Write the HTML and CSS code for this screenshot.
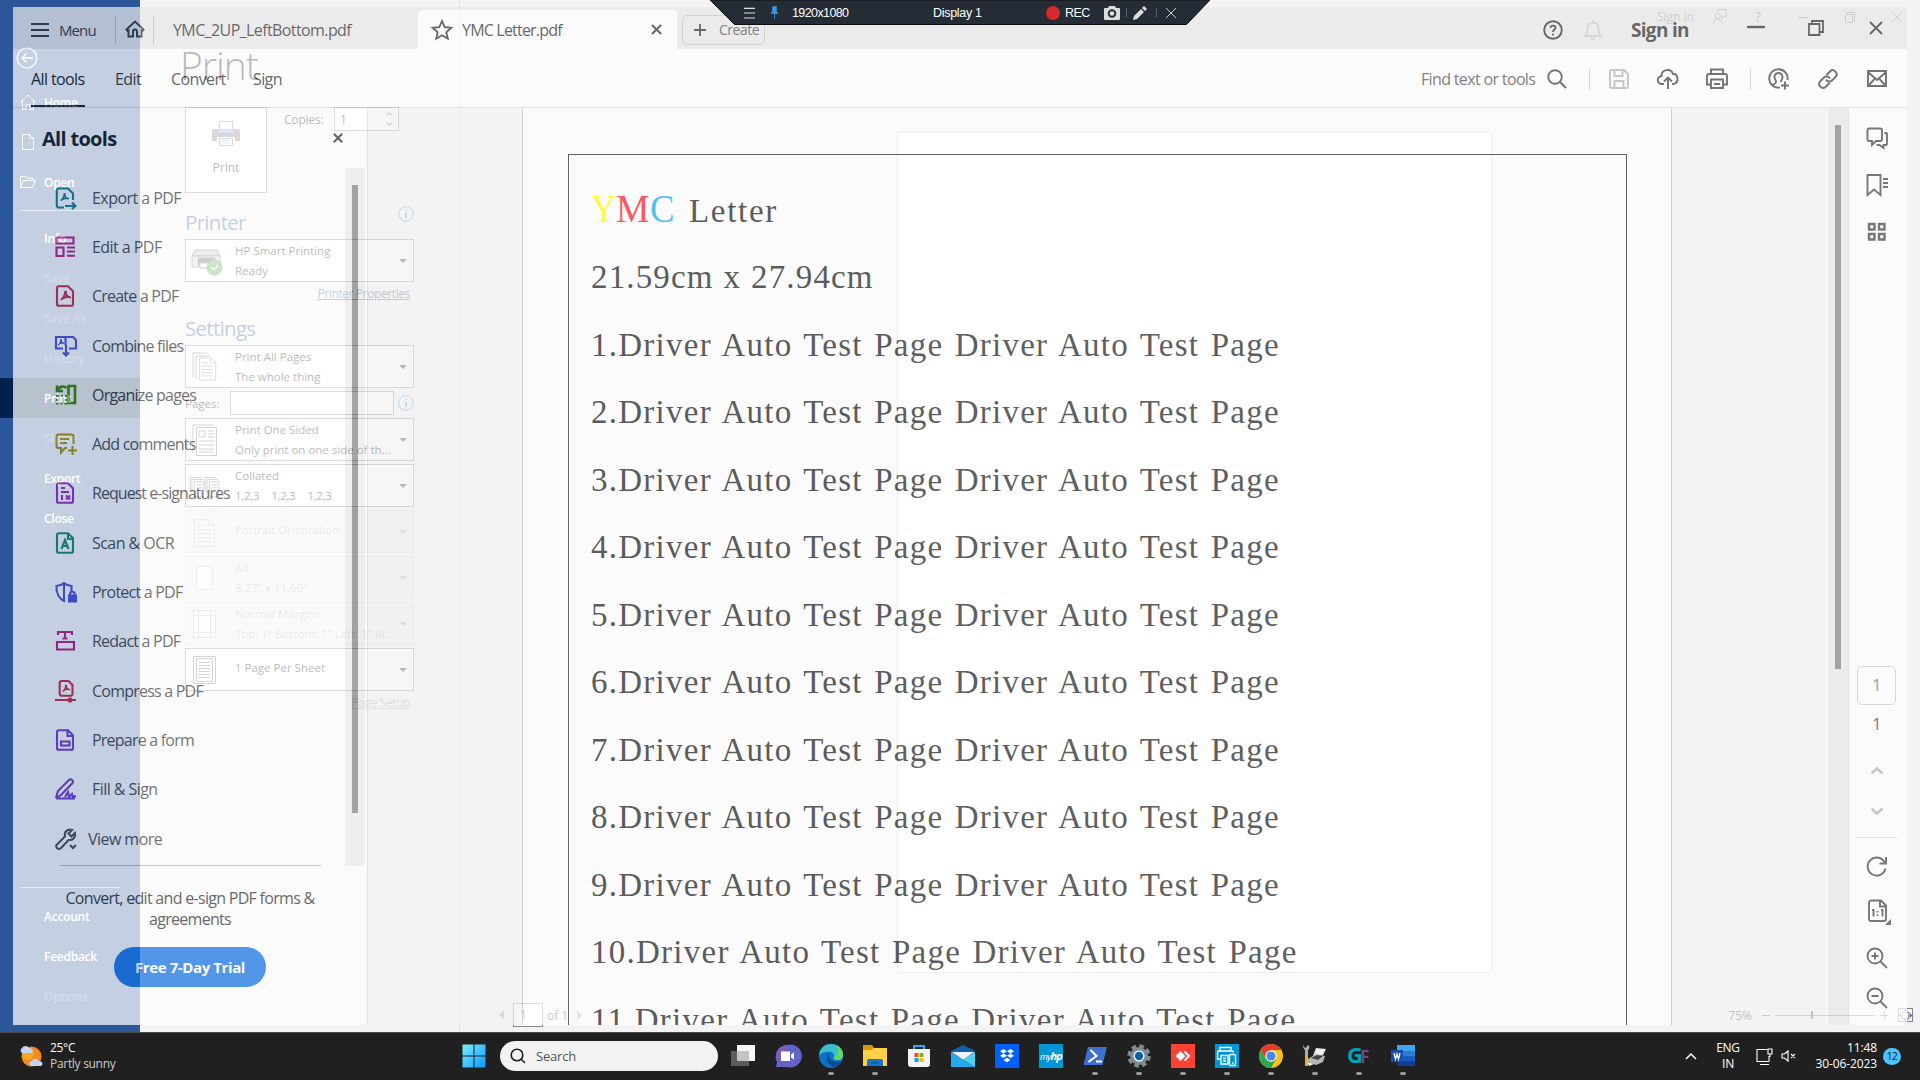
FILE: index.html
```html
<!DOCTYPE html>
<html lang="en">
<head>
<meta charset="utf-8">
<title>Desktop</title>
<link rel="stylesheet" href="styles.css">
</head>
<body>
<svg class="defs" width="0" height="0">
  <defs>
    <symbol id="sheet" viewBox="0 0 20 22"><path d="M4 1.200h9l5 5V19a1.800 1.800 0 0 1-1.800 1.800H3.800A1.800 1.800 0 0 1 2 19V3a1.800 1.800 0 0 1 2-1.800z"/></symbol>
    <symbol id="acro" viewBox="0 0 12 12"><path d="M1 10c2-1 4.600-5 4.600-8.500C5.600.5 6.800.5 6.600 2 6.300 4.500 8 7 11 7.500 11 6.200 4 7 1 10z"/></symbol>
    <symbol id="info" viewBox="0 0 16 16"><circle cx="8" cy="8" r="7.300"/><path d="M8 7v5M8 4v1.600" stroke-width="1.800"/></symbol>
    <symbol id="wdoc" viewBox="0 0 22 28"><path d="M.5.5h14l6 6v21H.5zM14.500.5v6h6M3 6.500h8M3 10.500h14M3 14.500h14M3 18.500h14M3 22.500h14"/></symbol>
  </defs>
</svg>

<section class="word">
  <nav class="backstage">
    <svg class="back" viewBox="0 0 22 22"><circle cx="11" cy="11" r="9.800"/><path d="M17 11H6M10.500 6.500 6 11l4.500 4.500"/></svg>
    <a><svg viewBox="0 0 16 16"><path d="M.5 8.500 8 1l7.500 7.500M2.500 7v8.500H6v-5h4v5h3.500V7"/></svg>Home</a>
    <a class="off new"><svg viewBox="0 0 16 16"><path d="M2.500.5h7l4 4v11h-11zM9.500.5v4h4"/></svg></a>
    <a><svg viewBox="0 0 16 16"><path d="M.5 13.500v-11h5l1 1.500h6v2.500M.5 13.500l3-7h12l-3 7z"/></svg>Open</a>
    <hr>
    <a class="plain">Info</a>
    <a class="plain off">Save</a>
    <a class="plain off">Save As</a>
    <a class="plain off">History</a>
    <a class="plain on">Print</a>
    <a class="plain off">Share</a>
    <a class="plain">Export</a>
    <a class="plain">Close</a>
    <hr class="low">
    <a class="plain">Account</a>
    <a class="plain">Feedback</a>
    <a class="plain off">Options</a>
  </nav>
  <div class="print">
    <h1>Print</h1>
    <div class="go">
      <button class="printbtn"><svg viewBox="0 0 28 25"><path fill="#777" d="M2 8h24a2 2 0 0 1 2 2v10h-5v-4H5v4H0V10a2 2 0 0 1 2-2z"/><path fill="#fff" stroke="#777" d="M7.500.5h13v8h-13zM7.500 17.500h13v7h-13z"/><path fill="#7fa7dd" d="M6 8h16v4H6zM10 19h8v1h-8zM10 21.500h8v1h-8z"/></svg><span>Print</span></button>
      <label>Copies:</label>
      <div class="copies"><span>1</span><svg viewBox="0 0 8 16"><path d="m1 4 3-3 3 3M1 12l3 3 3-3"/></svg></div>
    </div>
    <h2>Printer<svg class="i"><use href="#info"/></svg></h2>
    <div class="drop"><svg viewBox="0 0 32 28"><path fill="#b8bcc0" d="M4 3h22l3 6H1z"/><path fill="#d5d9dd" d="M1 9h28v11H1z"/><path fill="#555" d="M7 11h17v7H7z"/><path fill="#fff" d="M9 16h13v5H9z"/><circle cx="23.500" cy="20.500" r="7.500" fill="#45a52c"/><path d="m20 20 3 3 4-5" stroke="#fff" stroke-width="1.500"/></svg><div>HP Smart Printing<br>Ready</div></div>
    <a class="link">Printer Properties</a>
    <h2 class="set">Settings</h2>
    <div class="drop"><svg viewBox="0 0 32 34"><path d="M2 27V3h14M5 29V6h14" /><use href="#wdoc" x="8" y="7" width="18" height="24"/></svg><div>Print All Pages<br>The whole thing</div></div>
    <div class="pages"><label>Pages:</label><span></span><svg class="i"><use href="#info"/></svg></div>
    <div class="drop"><svg viewBox="0 0 32 34"><path d="M2 30V2h21M5.500 4.500h20v28h-20zM8 8h6v6H8zM17 8h6M17 11h6M17 14h6M8 18h15M8 22h15M8 26h15M8 29h15"/></svg><div>Print One Sided<br>Only print on one side of th...</div></div>
    <div class="drop"><svg viewBox="0 0 34 34"><path d="M-1 23V8h12M1 25V10h12M3.500 12.500h10v16h-10zM6 16h6M6 19h6M15 23V8h12M17 25V10h12M19.500 12.500h10v16h-10zM22 16h6M22 19h6"/></svg><div>Collated<br><span class="sets">1,2,3<i></i>1,2,3<i></i>1,2,3</span></div></div>
    <div class="drop dis one"><svg viewBox="0 0 32 34"><use href="#wdoc" x="3" y="4" width="22" height="28"/></svg><div>Portrait Orientation</div></div>
    <div class="drop dis"><svg viewBox="0 0 32 34"><path fill="#fdf8ff" d="M5.500 5.500h16v23h-16z"/></svg><div>A4<br>8.27" x 11.69"</div></div>
    <div class="drop dis"><svg viewBox="0 0 32 34"><path fill="#fdf8ff" d="M2.500 3.500h22v27h-22zM7.500 3v28M19.500 3v28M2 8.500h23M2 25.500h23"/></svg><div>Normal Margins<br>Top: 1" Bottom: 1" Left: 1" Ri...</div></div>
    <div class="drop one"><svg viewBox="0 0 32 34"><path d="M2.500 3.500h22v27h-22zM5.500 5.500h16v23h-16zM8 9.500h11M8 12.500h11M8 15.500h11M8 18.500h11M8 21.500h11M8 24.500h11"/></svg><div>1 Page Per Sheet</div></div>
    <a class="link faint">Page Setup</a>
  </div>
  <div class="preview">
    <div class="wtitle"><span>Sign in</span>
      <svg viewBox="0 0 16 18"><path d="M5 3V.5h10v8h-3l-2 3V8"/><circle cx="5.500" cy="8" r="3"/><path d="M.5 17c0-7 10-7 10 0"/></svg>
      <b>?</b>
      <svg viewBox="0 0 10 16"><path d="M0 8.500h10"/></svg>
      <svg viewBox="0 0 10 16"><path d="M.5 5.500h7v8h-7zM2.500 5.500v-2h7v8h-2"/></svg>
      <svg viewBox="0 0 10 16"><path d="m0 3 10 10M10 3 0 13"/></svg>
    </div>
    <div class="sheet"></div>
    <div class="wfoot"><i class="pl"></i><span class="pg">1</span><em>of 1</em><i class="pr"></i>
      <div class="zoom"><em>75%</em><b class="mn"></b><span class="rail"></span><b class="plus"></b><svg viewBox="0 0 16 16"><path d="M.5.5h15v14H.5zM4.500 4.500h7v7h-7z" stroke="#777"/><path fill="#2a6cb5" d="m6 3 2-2 2 2zM6 12.500l2 2 2-2zM3 6 1 8l2 2zM12.500 5v6l2.500-3z"/></svg></div>
    </div>
  </div>
</section>

<section class="acrobat">
  <header class="tabs">
    <svg class="burger" viewBox="0 0 18 16"><path d="M0 2h18M0 8h18M0 14h18" stroke-width="1.800"/></svg>
    <span class="menu">Menu</span><i class="sep"></i>
    <svg class="house" viewBox="0 0 20 18"><path d="M1.500 9.500 10 1.500l8.500 8-1 1.300-1-.3V16.500h-4.500v-5a2 2 0 0 0-4 0v5H3.500v-6l-1 .3z" stroke-width="2"/></svg>
    <i class="sep two"></i>
    <span class="tab">YMC_2UP_LeftBottom.pdf</span>
    <div class="tab active"><svg viewBox="0 0 22 22"><path d="m11 2 2.700 6.200 6.600.6-5 4.400 1.500 6.500L11 16.300l-5.800 3.400 1.500-6.500-5-4.400 6.600-.6z" stroke-width="1.800"/></svg><span>YMC Letter.pdf</span><svg class="x" viewBox="0 0 12 12"><path d="m1 1 10 10M11 1 1 11" stroke-width="2.200"/></svg></div>
    <button class="create"><svg viewBox="0 0 12 12"><path d="M6 0v12M0 6h12" stroke-width="1.800"/></svg>Create</button>
    <div class="sys">
      <svg class="help" viewBox="0 0 20 20"><circle cx="10" cy="10" r="8.800" stroke-width="1.900"/><path d="M7.500 8c0-3.500 5-3 5-.2C12.500 9.500 10 9.500 10 12M10 13.500v2" stroke-width="1.800"/></svg>
      <svg class="bell" viewBox="0 0 20 22"><path d="M2 17c2-2 2.500-4 2.500-8a5.500 5.500 0 0 1 11 0c0 4 .5 6 2.500 8zM8 20h4M10 1v2" stroke-width="1.900"/></svg>
      <strong>Sign in</strong>
      <svg class="min" viewBox="0 0 18 16"><path d="M0 7h18" stroke-width="2.400"/></svg>
      <svg class="max" viewBox="0 0 16 16"><path d="M1 4h10.500v11H1zM4 4V1h11v11h-3.500" stroke-width="1.800"/></svg>
      <svg class="cls" viewBox="0 0 14 14"><path d="m1 1 12 12M13 1 1 13" stroke-width="1.800"/></svg>
    </div>
  </header>
  <header class="bar">
    <span class="cur">All tools</span><span class="m2">Edit</span><span class="m3">Convert</span><span class="m4">Sign</span>
    <div class="tools">
      <span>Find text or tools</span>
      <svg class="mag" viewBox="0 0 20 20"><circle cx="8" cy="8" r="6.800"/><path d="m13 13 6 6"/></svg><i class="sep"></i>
      <svg class="save" viewBox="0 0 20 20"><path d="M1 2.500A1.500 1.500 0 0 1 2.500 1H15l4 4v12.500a1.500 1.500 0 0 1-1.500 1.500h-15A1.500 1.500 0 0 1 1 17.500zM5.500 1v6h8V1M5.500 19v-7h9v7"/></svg>
      <svg viewBox="0 0 22 22"><path d="M7 16H5a4 4 0 0 1-.5-8C4.500 1 14 0 16 6c5-1 7 9 0 10h-1M11 21V10M7 13.500l4-4 4 4"/></svg>
      <svg viewBox="0 0 22 22"><path d="M5 6V1.500h12V6M4.500 16.500H1V8a2 2 0 0 1 2-2h16a2 2 0 0 1 2 2v8.500h-3.500M5 11.500h12V20H5zM8 16h6"/></svg><i class="sep"></i>
      <svg viewBox="0 0 22 22"><path d="M12 19.500A9.200 9.200 0 1 1 19.500 12M5 17c3-2 3-2 3-4C5 9 7 5 10.500 5S16 9 13 13v1M17 13.500v8M13 17.500h8"/></svg>
      <svg viewBox="0 0 22 22"><path d="m9.500 7 4-4c3-3 8 2 5.500 5.500l-4 4c-2 2-5 1-6-1M12.500 15l-4 4C5 22 0 17 3 13.500l4-4c2-2 5-1 6 1"/></svg>
      <svg viewBox="0 0 22 22"><path d="M2 3h18v15H2zM2 4l9 8 9-8M2 18l6.500-7M20 18l-6.500-7"/></svg>
    </div>
  </header>
  <main>
    <aside>
      <div class="list">
        <h3>All tools</h3>
        <a class="c1 wide"><svg viewBox="0 0 22 22"><path d="M9 20.500H3.500A2 2 0 0 1 1.800 18.500V3.500a2 2 0 0 1 2-2H13l5 5V13M10 19h10M17 15.500l3.500 3.500-3.500 3"/><use href="#acro" x="4" y="6" width="11" height="9"/></svg>Export a PDF</a>
        <a class="c2 wide"><svg viewBox="0 0 22 22"><path d="M1.500 1.500h17v6h-17zM1.500 11.500h7v8.500h-7zM12 11.500h8M12 15.500h8M12 19.700h8"/></svg>Edit a PDF</a>
        <a class="c3"><svg viewBox="0 0 22 22"><use href="#sheet" x="0" y="0" width="20" height="22"/><use href="#acro" x="5" y="5.500" width="11" height="11"/></svg>Create a PDF</a>
        <a class="c4"><svg viewBox="0 0 22 22"><path d="M8 13.500H1V2h9.500v8M10.500 2H18l3 3v8.500h-7M11 10v10M8 17.500l3 3 3-3"/><use href="#acro" x="2.500" y="3.500" width="7" height="8"/></svg>Combine files</a>
        <a class="c5"><svg viewBox="0 0 22 22"><path d="M13.500 2h6.500v17h-6.500zM2 1.500v5.500h6M2.500 6.500c2-5 7-4.500 9-2.500" stroke-width="2.600"/><path d="M2 12h9v7.500H2z" stroke-dasharray="2 2"/></svg>Organize pages</a>
        <a class="c6"><svg viewBox="0 0 22 22"><path d="M12 15h-2l-4 4.500V15H3.500a2 2 0 0 1-2-2V3.500a2 2 0 0 1 2-2h13a2 2 0 0 1 2 2V11M5 6h9M5 10h7M17.500 13v9M13 17.500h9"/></svg>Add comments</a>
        <a class="c7 tight"><svg viewBox="0 0 22 22"><use href="#sheet" x="0" y="0" width="20" height="22"/><path d="M6 6h4M6 10h8M7 13v5M11 13.500l4 4M15 13.500l-4 4"/></svg>Request e-signatures</a>
        <a class="c8 wide"><svg viewBox="0 0 22 22"><use href="#sheet" x="0" y="0" width="20" height="22"/><path d="m6.500 17 3.500-9 3.500 9M8 14h4.500M13 1.500V7h5"/></svg>Scan &amp; OCR</a>
        <a class="c4"><svg viewBox="0 0 22 22"><path d="M10 20.500c-6-3-9-7-8.500-15.500 3 0 5-1 7.500-3 2.500 2 4.500 3 7.500 3v5M9 2v18M15 14v-1a2.300 2.300 0 0 1 4.600 0v1"/><path fill="currentColor" d="M14 14.500h7v6h-7z"/></svg>Protect a PDF</a>
        <a class="c2"><svg viewBox="0 0 22 22"><path d="M3 5V2h14v3M10 2v6.500M7.500 8.500h5M2 12h17v7.500H2z"/></svg>Redact a PDF</a>
        <a class="c3"><svg viewBox="0 0 22 22"><path d="M6.500 1h7l4 4v9a1.800 1.800 0 0 1-1.800 1.800H6.500A1.800 1.800 0 0 1 4.700 14V2.800A1.800 1.800 0 0 1 6.500 1zM0 20h21"/><circle cx="15" cy="20" r="1.500"/><use href="#acro" x="7" y="4.500" width="8" height="8"/></svg>Compress a PDF</a>
        <a class="c9"><svg viewBox="0 0 22 22"><use href="#sheet" x="0" y="0" width="20" height="22"/><path d="M6 12.500h8.500v4H6zM12.500 1.500V7h5"/></svg>Prepare a form</a>
        <a class="c9 wide"><svg viewBox="0 0 22 22"><path d="m1 20 2-7L14 2c2-2 5 1 3.500 3L7 16l-6 4.500M1 20.500h19M10 19l3-5 1 5 3-3 1 3 3-1"/></svg>Fill &amp; Sign</a>
        <a class="vm"><svg viewBox="0 0 22 22"><path d="M2 20c-2-2 0-3.500 0-3.500l8-8C9 4 12 .5 17 2l-3.500 3.500 3 3L20 5c1 4-2 7.500-6.500 7L6 20c-1.500 1.500-3 1-4 0zM15 17l3 3 3-3"/></svg>View more</a>
        <hr>
      </div>
      <p>Convert, edit and e-sign PDF forms &amp;<br>agreements</p>
      <button class="trial">Free 7-Day Trial</button>
      <svg class="close" viewBox="0 0 12 12"><path d="m1 1 10 10M11 1 1 11" stroke-width="2.600"/></svg>
      <div class="track"><i></i></div>
    </aside>
    <div class="doc">
      <article>
        <div class="frame">
          <h4><span class="y">Y</span><span class="m">M</span><span class="c">C</span><b>Letter</b></h4>
          <p class="dim">21.59cm x 27.94cm</p>
          <p>1.Driver Auto Test Page Driver Auto Test Page</p>
          <p>2.Driver Auto Test Page Driver Auto Test Page</p>
          <p>3.Driver Auto Test Page Driver Auto Test Page</p>
          <p>4.Driver Auto Test Page Driver Auto Test Page</p>
          <p>5.Driver Auto Test Page Driver Auto Test Page</p>
          <p>6.Driver Auto Test Page Driver Auto Test Page</p>
          <p>7.Driver Auto Test Page Driver Auto Test Page</p>
          <p>8.Driver Auto Test Page Driver Auto Test Page</p>
          <p>9.Driver Auto Test Page Driver Auto Test Page</p>
          <p>10.Driver Auto Test Page Driver Auto Test Page</p>
          <p>11.Driver Auto Test Page Driver Auto Test Page</p>
        </div>
      </article>
      <div class="vtrack"><i></i></div>
    </div>
    <div class="side">
      <svg viewBox="0 0 22 22"><path d="M3 1.500h11.500a1.500 1.500 0 0 1 1.500 1.500v9.500a1.500 1.500 0 0 1-1.500 1.500H10l-4 4v-4H3A1.500 1.500 0 0 1 1.500 12.500V3A1.500 1.500 0 0 1 3 1.500zM18.500 6H20a1 1 0 0 1 1 1v10a1 1 0 0 1-1 1h-2.500v3l-4-3h-3"/></svg>
      <svg viewBox="0 0 22 22"><path d="M1.500 1h13v20L8 15.500 1.500 21zM17 5h5M17 9h5M17 13h5"/></svg>
      <svg viewBox="0 0 22 22"><path d="M3 3h5.500v5.500H3zM13 3h5.500v5.500H13zM3 13h5.500v5.500H3zM13 13h5.500v5.500H13z" stroke-width="2.400"/></svg>
      <div class="pbox">1</div>
      <div class="pnum">1</div>
      <svg class="ch" viewBox="0 0 22 22"><path d="m5.500 13.500 5.500-5 5.500 5" stroke-width="2.600"/></svg>
      <svg class="ch d" viewBox="0 0 22 22"><path d="m5.500 8.500 5.500 5 5.500-5" stroke-width="2.600"/></svg>
      <hr>
      <svg class="r1" viewBox="0 0 22 22"><path d="M19.500 13.500A9 9 0 1 1 19 8M20 2v6.500h-6.500"/></svg>
      <svg class="r2" viewBox="0 0 24 26"><path d="M4 1.500h10l5 5V20a2 2 0 0 1-2 2H4a2 2 0 0 1-2-2V3.500a2 2 0 0 1 2-2zM13 2v5.500h6M5 11h1.500v6.500M14 11h1.500v6.500M10.500 12v1.500M10.500 15.500v1.500"/><path fill="currentColor" stroke="none" d="M24 20v6h-6z"/></svg>
      <svg class="r3" viewBox="0 0 22 22"><circle cx="9" cy="9" r="7.500"/><path d="m14.500 14.500 6.500 6.500M5.500 9h7M9 5.500v7"/></svg>
      <svg class="r4" viewBox="0 0 22 22"><circle cx="9" cy="9" r="7.500"/><path d="m14.500 14.500 6.500 6.500M5.500 9h7"/></svg>
    </div>
  </main>
</section>

<div class="rec">
  <svg class="bg" viewBox="0 0 500 25"><path d="M0 0h500l-23.500 24.500H24.500z" fill="#262c35" stroke="#0c0e12"/></svg>
  <div class="recrow">
    <svg class="rm" viewBox="0 0 12 12"><path d="M0 1h12M0 6h12M0 11.500h12" stroke="#ddd" stroke-width="1.200"/></svg>
    <svg class="rp" viewBox="0 0 10 14"><path d="M2.500 0h5v6l2 2.500h-9l2-2.500zM4.500 8h1v6h-1z" fill="#3e97e8"/></svg>
    <span class="res">1920x1080</span><span class="dsp">Display 1</span><i class="dot"></i><span class="rc">REC</span>
    <svg class="cam" viewBox="0 0 16 14"><path fill="#ddd" d="M1 2h3l1-2h6l1 2h3a1 1 0 0 1 1 1v10a1 1 0 0 1-1 1H1a1 1 0 0 1-1-1V3a1 1 0 0 1 1-1z"/><circle cx="8" cy="7.500" r="3.300" stroke="#262c35" stroke-width="2"/></svg>
    <i class="v"></i>
    <svg class="pen" viewBox="0 0 14 14"><path fill="#ddd" d="m0 14 1-4 7-7 3 3-7 7zM9 2l2-2 3 3-2 2z"/></svg>
    <i class="v w"></i>
    <svg class="rx" viewBox="0 0 10 10"><path d="m0 0 10 10M10 0 0 10" stroke="#ccc"/></svg>
  </div>
</div>

<footer class="taskbar">
  <div class="weather"><svg viewBox="0 0 24 24"><circle cx="12.500" cy="12.500" r="10" fill="#f58a1f"/><circle cx="9" cy="10" r="6" fill="#f9a825"/><path fill="#c3d5f5" d="M3 9a3 3 0 0 1 0-5 4 4 0 0 1 7 0c3 0 5 3 3 5zM13 22a2.500 2.500 0 0 1 0-5 3.500 3.500 0 0 1 6.500 0c5 0 5 5 2 5z"/></svg><div>25°C<br><span>Partly sunny</span></div></div>
  <svg class="start" viewBox="0 0 24 24"><defs><linearGradient id="w" x2="1" y2="1"><stop stop-color="#7cf0ff"/><stop offset="1" stop-color="#0a96ff"/></linearGradient></defs><path fill="url(#w)" d="M.5.5h11v11H.5zM12.500.5h11v11h-11zM.5 12.500h11v11H.5zM12.500 12.500h11v11h-11z"/></svg>
  <div class="search"><svg viewBox="0 0 16 16"><circle cx="7" cy="7" r="5.800"/><path d="m11 11 4 4"/></svg>Search</div>
  <div class="apps">
    <span><svg viewBox="0 0 24 24"><path fill="#f6f6f6" d="M6 1h18v16H6z"/><path fill="#5c5c5c" d="M0 7h18v15H0z"/><path fill="#c4c4c4" d="M6 7h12v10H6z"/></svg></span>
    <span><svg viewBox="0 0 24 24"><path fill="#6264c7" d="M12 1a11.500 11.500 0 1 1 0 22H1l1-5A11.500 11.500 0 0 1 12 1z"/><path fill="#8a5fa8" opacity=".6" d="M12 1A11.500 11.500 0 0 0 2 16l9-6z"/><path fill="#fff" d="M6 7.500h9v9.500H6zM16 10.500l3-2v7l-3-2z"/></svg></span>
    <span class="run"><svg viewBox="0 0 24 24"><circle cx="12" cy="12" r="12" fill="#0c72c9"/><path fill="#38bfd0" d="M0 11C1 3 7 0 12 0c8 0 12 6 12 11 0 3-2 5-5 5-4 0-5-1-4-3 1-4-3-6-7-5-3 0-6 1-8 3z"/><path fill="#5ed968" d="M17 1c5 2 7 6 7 10 0 3-2 5-5 5-4 0-5-1-4-3 5 0 5-6 2-12z"/><path fill="#114b8d" d="M9 9c-3 5 0 13 6 14 4-1 6-3 8-6-6 3-14 0-14-8z"/></svg></span>
    <span class="run"><svg viewBox="0 0 24 24"><path fill="#d99800" d="M0 1h9l2 3h13v4H0z"/><path fill="#ffcf48" d="M0 6h8l3-2h13v18H0z"/><path fill="#1676c8" d="M4 22v-5a2 2 0 0 1 2-2h12a2 2 0 0 1 2 2v5z"/><path fill="#0b5ba1" d="M8 18h8v1.500H8z"/></svg></span>
    <span><svg viewBox="0 0 24 24"><path d="M7 6V2h10v4" fill="none" class="handle"/><path fill="#f4f4f4" d="M1 5h22v15a3 3 0 0 1-3 3H4a3 3 0 0 1-3-3z"/><path fill="#f25022" d="M7.500 9h4v4h-4z"/><path fill="#7fba00" d="M12.500 9h4v4h-4z"/><path fill="#00a4ef" d="M7.500 14h4v4h-4z"/><path fill="#ffb900" d="M12.500 14h4v4h-4z"/></svg></span>
    <span><svg viewBox="0 0 24 24"><path fill="#0f62ae" d="m0 7 12-6 12 6v4H0z"/><path fill="#f2f2f2" d="M1 8h22l-11 8z"/><path fill="#28a8ea" d="m0 8 24 15H0z"/><path fill="#50d0f7" d="M24 8 12 15.500 24 23z"/></svg></span>
    <span><svg viewBox="0 0 24 24"><path fill="#0061ff" d="M0 0h24v24H0z"/><path fill="#fff" d="m8.500 5 3.500 2.200-3.500 2.200L5 7.200zM15.500 5 19 7.200l-3.500 2.200L12 7.200zM8.500 9.600l3.500 2.200L8.500 14 5 11.800zM15.500 9.600l3.500 2.200-3.500 2.200-3.500-2.200zM12 13.800l3.500 2.200-3.500 2.200L8.500 16z"/></svg></span>
    <span class="myhp">my<b>hp</b></span>
    <span class="run"><svg viewBox="0 0 24 24"><path fill="#3e6fd0" d="M5 3h19l-4.500 18H.5z"/><path d="m7.500 6 6 6-8 6M13 17.500h6" stroke="#fff" stroke-width="2" fill="none"/></svg></span>
    <span class="run"><svg viewBox="0 0 24 24"><circle cx="12" cy="12" r="9" fill="#7f8a92"/><circle cx="12" cy="12" r="9.700" fill="none" stroke="#7f8a92" stroke-width="4" stroke-dasharray="4.600 3.020"/><circle cx="12" cy="12" r="5.500" fill="#fff"/><circle cx="12" cy="12" r="4.200" fill="#0860ad"/></svg></span>
    <span class="run"><svg viewBox="0 0 24 24"><path fill="#fb4235" d="M0 0h24v24H0z"/><path fill="#fff" d="m9.500 7 5 5-5 5-5-5z"/><path d="m13.500 7.500 4.500 4.500-4.500 4.500" stroke="#fff" stroke-width="2" fill="none"/></svg></span>
    <span class="run"><svg viewBox="0 0 24 24"><path fill="#0096d6" d="M0 0h24v24H0z"/><path fill="none" stroke="#fff" stroke-width="1.300" d="M5 7V3.500h11V7M5 15H2.500V8.500A1.500 1.500 0 0 1 4 7h13a1.500 1.500 0 0 1 1.500 1.500M6 11.500h7V20H6zM8 14.500h3M8 17h3M15.500 10.500h4a1 1 0 0 1 1 1v9a1 1 0 0 1-1 1h-4a1 1 0 0 1-1-1v-9a1 1 0 0 1 1-1zM17 19h1.500"/></svg></span>
    <span class="run"><svg viewBox="0 0 24 24"><circle cx="12" cy="12" r="12" fill="#fbc116"/><path fill="#e33b2e" d="M1.600 6A12 12 0 0 1 22.400 6H12L7 15z"/><path fill="#2da94f" d="M1.600 6A12 12 0 0 0 12 24l5-9H7z"/><circle cx="12" cy="12" r="5.700" fill="#fff"/><circle cx="12" cy="12" r="4.500" fill="#4285f4"/></svg></span>
    <span class="run"><svg viewBox="0 0 24 24"><path fill="#aab0b5" d="M0 1l2 3 2-1V1c3 0 3 4 1 5v6H2V6C1 5 0 4 0 1z"/><path fill="#e3b020" d="M2 11h3v11H2z"/><path fill="#eee" d="m13 4 10 1-3 6-10 1z"/><path fill="#b4b6b8" d="m5 15 8-5 9 2-2 6-7 3-8-3z"/><path fill="#444" d="m8 14 6-3 6 1-5 4z"/><path fill="#fff" d="m4 18 7 2-5 2z"/></svg></span>
    <span class="run gf"><b>G</b><b>F</b></span>
    <span class="run"><svg viewBox="0 0 24 24"><path fill="#41a5ee" d="M6 1h18v6H6z"/><path fill="#2b7cd3" d="M6 7h18v5H6z"/><path fill="#185abd" d="M6 12h18v5H6z"/><path fill="#103f91" d="M6 17h18v5H6z"/><path fill="#144ea8" d="M0 6h12v12H0z"/><path d="m3 9 1.500 6L6 10l1.500 5L9 9" stroke="#fff" stroke-width="1.300" fill="none"/></svg></span>
  </div>
  <div class="tray">
    <svg class="up" viewBox="0 0 12 8"><path d="m1 7 5-5 5 5" stroke-width="1.500"/></svg>
    <div class="lang">ENG<br>IN</div>
    <svg class="net" viewBox="0 0 17 17"><path d="M11 1.500H1v12h12V8M4 16.500h9M12 1h4v5h-4zM14 6v3"/></svg>
    <svg class="spk" viewBox="0 0 16 14"><path d="M1 5v4h2.500L7 12V2L3.500 5zM10 5l4 4M14 5l-4 4"/></svg>
    <div class="time">11:48<br>30-06-2023</div>
    <b class="badge">12</b>
  </div>
</footer>
</body>
</html>
```
FILE: styles.css
```css
* { box-sizing: border-box; }
body { margin: 0; width: 1920px; height: 1080px; overflow: hidden; position: relative; background: #f3f3f3; font-family: "Open Sans", "Noto Sans", sans-serif; }
svg { display: block; flex: none; fill: none; stroke: currentColor; overflow: visible; }
.defs { position: absolute; }
h1, h2, h3, h4, p, hr { margin: 0; font-weight: normal; }
hr { border: 0; }
button { font: inherit; padding: 0; }
i, em { font-style: normal; display: block; flex: none; }

/* Word backstage window */
.word { position: absolute; inset: 0 0 48px 0; display: flex; color: #000; font-size: 12px; }
.backstage { width: 140px; height: 1032px; background: #2b579a; color: #fff; padding-top: 47px; display: flex; flex-direction: column; }
.backstage .back { width: 22px; height: 22px; margin: 0 0 13px 16px; stroke-width: 1.3; }
.backstage a { height: 40px; flex: none; display: flex; align-items: center; padding-left: 20px; gap: 8px; font-weight: 600; letter-spacing: -.25px; }
.backstage a svg { width: 16px; height: 16px; }
.backstage a.plain { padding-left: 44px; }
.backstage a.off { color: #5f80b2; }
.backstage a.new { color: #fff; }
.backstage a.on { background: #002050; }
.backstage hr { width: 100px; height: 1px; background: #a9bcd9; margin: 8px 0 7px 20px; flex: none; }
.backstage hr.low { margin: 349px 0 8px 20px; }
.print { width: 320px; padding: 42px 0 0 45px; flex: none; border-right: 1px solid #e2e2e2; }
.print h1 { font-size: 39px; font-weight: 300; line-height: 46px; height: 65px; margin-left: -5px; letter-spacing: -1px; }
.go { display: flex; width: 229px; }
.printbtn { width: 82px; height: 86px; background: #fff; border: 1px solid #888; display: flex; flex-direction: column; align-items: center; padding-top: 13px; color: #000; line-height: 18px; }
.printbtn svg { width: 28px; height: 25px; margin-bottom: 13px; stroke: none; }
.go label { margin: 5px 11px 0 17px; line-height: 16px; width: 39px; letter-spacing: -.2px; }
.copies { width: 65px; height: 24px; border: 1px solid #888; background: #fff; display: flex; align-items: center; justify-content: space-between; padding: 0 5px; flex: none; }
.copies svg { width: 7px; height: 14px; }
.print h2 { font-size: 20.5px; line-height: 26px; height: 46px; color: #2b579a; font-weight: 400; padding-top: 16px; display: flex; justify-content: space-between; width: 229px; letter-spacing: -.7px; }
.print h2.set { height: 43px; padding-top: 13px; }
.i { width: 16px; height: 16px; color: #1c9ad8; }
.print h2 .i { margin-top: -3px; }
.drop { width: 229px; height: 43px; border: 1px solid #888; background: #fff; margin-bottom: 3px; display: flex; align-items: center; position: relative; line-height: 20px; font-size: 11.5px; white-space: nowrap; }
.drop > svg { width: 32px; height: 34px; margin: 0 12px 0 5px; stroke: #666; }
.drop.one > div { margin-bottom: 3px; }
.drop::after { content: ""; position: absolute; right: 6px; top: 19px; border: 4px solid transparent; border-top-color: #222; }
.drop.dis { background: #efefef; border-color: #d8d8d8; color: #b0b0b0; letter-spacing: -.05px; }
.drop.dis > svg { stroke: #c4b8c8; }
.drop.dis::after { border-top-color: #aaa; }
.sets { display: flex; letter-spacing: -.3px; }
.sets i { width: 12px; }
.link { display: block; width: 225px; text-align: right; color: #2b579a; text-decoration: underline; line-height: 18px; height: 17px; letter-spacing: -.4px; }
.link.faint { color: #aaa; }
.pages { display: flex; align-items: center; height: 24px; margin-bottom: 3px; width: 229px; justify-content: space-between; font-size: 11.5px; }
.pages label { width: 45px; }
.pages span { width: 164px; height: 24px; border: 1px solid #888; background: #fff; margin-right: auto; }
.preview { flex: 1; display: flex; flex-direction: column; }
.wtitle { height: 132px; display: flex; justify-content: flex-end; align-items: flex-start; padding: 9px 18px 0 0; color: #888; line-height: 16px; }
.wtitle svg { width: 10px; height: 16px; margin-left: 37px; }
.wtitle span + svg { width: 16px; margin-left: 18px; }
.wtitle b { font-weight: 400; font-size: 14px; margin-left: 27px; }
.sheet { width: 595px; height: 841px; margin-left: 437px; background: #fff; border: 1px solid #ccc; }
.wfoot { display: flex; align-items: center; height: 24px; margin: 30px 7px 0 39px; color: #444; }
.pl, .pr { border: 5px solid transparent; border-right: 5px solid #999; border-left: 0; margin-right: 9px; }
.pr { border-left: 5px solid #999; border-right: 0; margin-left: 9px; }
.pg { width: 30px; height: 24px; border: 1px solid #888; background: #fff; padding-left: 6px; line-height: 22px; margin-right: 4px; }
.zoom { display: flex; align-items: center; margin-left: auto; }
.zoom .mn { width: 8px; height: 1px; background: #666; margin: 0 5px 0 10px; }
.zoom .rail { width: 100px; height: 1px; background: #888; position: relative; }
.zoom .rail::after { content: ""; position: absolute; left: 36px; top: -4px; width: 2px; height: 8px; background: #444; }
.zoom .plus { width: 8px; height: 8px; margin: 0 10px 0 5px; background: linear-gradient(#777, #777) 50%/8px 1px no-repeat, linear-gradient(#777, #777) 50%/1px 8px no-repeat; }
.zoom svg { width: 15px; height: 15px; stroke: none; }

/* Acrobat window, mid fade */
.acrobat { position: absolute; left: 13px; top: 7px; width: 1894px; height: 1018px; opacity: .72; background: #fff; color: #323232; display: flex; flex-direction: column; overflow: hidden; font-size: 16px; letter-spacing: -.5px; }
.tabs { height: 42px; background: #e9e9e9; display: flex; align-items: center; padding-left: 18px; flex: none; }
.burger { width: 18px; height: 16px; margin-bottom: -3px; }
.menu { width: 45px; margin: 3px 11px 0 10px; font-size: 15px; letter-spacing: -.9px; }
.tabs .sep { width: 1px; height: 28px; background: #bbb; margin-top: 3px; }
.tabs .house { width: 20px; height: 18px; margin: 2px 0 0 9px; }
.tabs .sep.two { margin-left: 8px; }
.tab { width: 264px; padding-left: 19px; flex: none; }
.tabs > span.tab { margin-top: 3px; letter-spacing: -.6px; }
.tab.active { width: 259px; height: 39px; margin-top: 3px; background: #fff; border-radius: 4px 4px 0 0; display: flex; align-items: center; padding-left: 13px; letter-spacing: -.8px; }
.tab.active svg { width: 22px; height: 22px; }
.tab.active span { width: 180px; margin-left: 9px; }
.tab.active svg.x { width: 11px; height: 11px; margin-left: 9px; }
.create { width: 83px; height: 30px; margin: 3px 0 0 5px; border: 1px solid #c6c6c6; border-radius: 5px; background: none; display: flex; align-items: center; gap: 13px; padding-left: 11px; font-size: 14px; letter-spacing: -.5px; color: #555; flex: none; }
.create svg { width: 12px; height: 12px; color: #333; }
.sys { margin-left: auto; display: flex; align-items: center; padding-right: 24px; }
.sys .help { width: 20px; height: 20px; margin-top: 3px; }
.sys .bell { width: 20px; height: 22px; margin: 4px 0 0 20px; color: #ccc; }
.sys strong { font-size: 19px; width: 63px; margin: 3px 0 0 28px; font-weight: 700; letter-spacing: -.7px; white-space: nowrap; }
.sys .min { width: 18px; height: 16px; margin-left: 53px; }
.sys .max { width: 16px; height: 16px; margin-left: 43px; }
.sys .cls { width: 14px; height: 14px; margin-left: 45px; }
.bar { height: 59px; display: flex; align-items: center; padding-left: 18px; border-bottom: 1px solid #ddd; flex: none; }
.bar > span { margin-top: 1px; letter-spacing: -.6px; }
.bar .cur { width: 54px; color: #111; height: 100%; line-height: 60px; border-bottom: 2px solid #111; margin: 0; white-space: nowrap; }
.bar .m2 { margin-left: 30px; width: 27px; }
.bar .m3 { margin-left: 29px; width: 54px; }
.bar .m4 { margin-left: 28px; }
.tools { margin-left: auto; display: flex; align-items: center; padding: 2px 19px 0 0; color: #444; }
.tools span { width: 115px; white-space: nowrap; color: #555; letter-spacing: -.65px; }
.tools svg { width: 22px; height: 22px; margin-left: 27px; stroke-width: 1.9; }
.tools .mag { width: 20px; height: 20px; margin-left: 11px; }
.tools .sep { width: 1px; height: 21px; background: #ccc; margin-left: 22px; }
.tools .save { width: 20px; height: 20px; margin-left: 19px; color: #b5b5b5; }
.tools .save + svg { margin-left: 28px; }
.tools .sep + svg:not(.save) { margin-left: 17px; }
main { flex: 1; display: flex; min-height: 0; }
aside { width: 355px; border-right: 1px solid #ddd; position: relative; flex: none; }
.list { padding: 12px 0 0 42px; }
.list h3 { font-weight: 700; font-size: 20px; line-height: 38px; margin: 0 0 15px -13px; letter-spacing: -.7px; color: #111; }
.list a { height: 49.3px; display: flex; align-items: center; gap: 15px; white-space: nowrap; letter-spacing: -.78px; }
.list a.wide { letter-spacing: -.55px; }
.list a.tight { letter-spacing: -.95px; }
.list a svg { width: 22px; height: 22px; stroke-width: 2.1; color: inherit; }
.list a { -webkit-text-fill-color: #444; }
.list .vm { gap: 11px; height: 51px; color: #444; letter-spacing: -.55px; }
.list hr { height: 1px; width: 261px; background: #bbb; margin: 0 0 0 5px; }
.c1 { color: #0d7b80; } .c2 { color: #b8137c; } .c3 { color: #c6203c; } .c4 { color: #4646d8; } .c5 { color: #3d9310; }
.c6 { color: #a78f00; } .c7 { color: #9a1fb8; } .c8 { color: #12875a; } .c9 { color: #7033c4; }
aside p { text-align: center; width: 280px; margin: 22px 0 0 37px; line-height: 21px; letter-spacing: -.7px; white-space: nowrap; }
.trial { display: block; width: 152px; height: 40px; border: 0; border-radius: 20px; background: #1473e6; color: #fff; font-weight: 700; font-size: 15px; letter-spacing: -.4px; margin: 17px 0 0 101px; }
.close { position: absolute; left: 320px; top: 25px; width: 10px; height: 10px; }
.track { position: absolute; left: 332px; top: 60px; width: 20px; height: 698px; background: #ededed; padding: 17px 7px; }
.track i { width: 6px; height: 628px; background: #858585; }
.doc { flex: 1; background: #f3f3f3; display: flex; overflow: hidden; }
article { width: 1150px; height: 917px; margin-left: 154px; background: #fff; border: solid #c4c4c4; border-width: 0 1px; padding: 46px 44px 0 45px; overflow: hidden; }
.frame { height: 900px; border: 1.5px solid #2b2b2b; border-bottom: 0; padding: 30px 0 0 22px; font-family: "Liberation Serif", serif; font-size: 33px; color: #222; white-space: nowrap; }
.frame h4 { height: 54px; line-height: 48px; font-size: 40px; display: flex; letter-spacing: 0; }
.frame h4 b { font-weight: 400; font-size: 33px; margin-left: 13px; padding-top: 2px; letter-spacing: 1.7px; }
.y { color: #ff0; width: 25px; transform: scaleX(.88); transform-origin: 0 0; }
.m { color: #ff1a2a; width: 34px; transform: scaleX(.94); transform-origin: 0 0; }
.c { color: #10aef0; width: 26px; transform: scaleX(.92); transform-origin: 0 0; }
.frame p { height: 67.5px; line-height: 76px; letter-spacing: 1.25px; word-spacing: 1.9px; }
.frame p.dim { letter-spacing: 1.15px; height: 67.5px; word-spacing: .5px; }
.vtrack { width: 21px; background: #e9e9e9; margin-left: auto; padding: 17px 7px; border-left: 1px solid #fff; flex: none; }
.vtrack i { width: 6px; height: 544px; background: #858585; }
.side { width: 59px; border-left: 1px solid #ddd; display: flex; flex-direction: column; align-items: center; padding: 19px 3px 0 0; color: #484848; flex: none; }
.side svg { width: 22px; height: 22px; margin-bottom: 25px; stroke-width: 1.9; flex: none; }
.pbox { width: 39px; height: 39px; border: 1px solid #ccc; border-radius: 5px; margin-top: 398px; text-align: center; line-height: 36px; color: #777; flex: none; }
.pnum { line-height: 20px; margin: 9px 0 26px; }
.side .ch { color: #b5b5b5; margin-bottom: 18px; }
.side .d { margin-bottom: 15px; }
.side hr { width: 41px; height: 1px; background: #ddd; margin-bottom: 17px; flex: none; }
.side .r1 { margin-bottom: 22px; }
.side .r2 { width: 24px; height: 26px; margin: 0 0 22px 4px; }
.side .r3 { margin-bottom: 18px; }

/* Screen recorder bar */
.rec { position: absolute; left: 710px; top: 0; width: 500px; height: 25px; color: #fff; }
.bg { position: absolute; inset: 0; }
.recrow { position: relative; display: flex; align-items: center; height: 25px; font: 12.5px "Liberation Sans", sans-serif; letter-spacing: -.6px; padding-left: 34px; white-space: nowrap; }
.recrow svg { stroke-width: 1; stroke: none; }
.rm { width: 11px; height: 12px; }
.rp { width: 9px; height: 13px; margin-left: 15px; }
.res { width: 54px; margin-left: 13px; }
.dsp { width: 48px; margin-left: 87px; letter-spacing: -.3px; }
.dot { width: 14px; height: 14px; border-radius: 50%; background: #d82a2a; margin-left: 65px; }
.rc { width: 26px; margin-left: 5px; }
.cam { width: 16px; height: 14px; margin-left: 13px; }
.v { width: 1px; height: 9px; background: #596070; margin-left: 6px; }
.pen { width: 14px; height: 14px; margin-left: 6px; }
.w { margin-left: 9px; }
.rx { width: 10px; height: 10px; margin-left: 9px; }

/* Taskbar */
.taskbar { position: absolute; left: 0; right: 0; bottom: 0; height: 48px; background: #202020; border-top: 1px solid #4a4a4a; color: #fff; display: flex; align-items: center; padding-bottom: 1px; font-size: 12px; line-height: 16px; }
.taskbar svg { stroke: none; }
.taskbar .handle { stroke: #25aeea; stroke-width: 2; }
.weather { display: flex; width: 462px; padding-left: 19px; gap: 7px; align-items: center; letter-spacing: -.3px; }
.weather svg { width: 24px; height: 24px; }
.weather span { color: #ccc; }
.start { width: 24px; height: 24px; }
.search { width: 218px; height: 30px; margin: 0 13px 0 14px; background: #f2f2f2; border-radius: 15px; color: #555; display: flex; align-items: center; gap: 10px; padding-left: 10px; font-size: 13px; letter-spacing: -.2px; flex: none; }
.taskbar .search svg { width: 16px; height: 16px; stroke: #222; stroke-width: 1.6; }
.apps { display: flex; gap: 20px; }
.apps span { width: 24px; height: 24px; position: relative; flex: none; }
.apps svg { width: 24px; height: 24px; }
.run::after { content: ""; position: absolute; left: 9px; top: 28px; width: 6px; height: 3px; border-radius: 2px; background: #9a9a9a; }
.apps .myhp { background: #0096d6; font-size: 9px; font-style: italic; line-height: 23px; text-align: center; letter-spacing: -.8px; }
.myhp b { font-size: 11px; }
.apps .gf { font-size: 22px; line-height: 20px; color: #00a5b5; letter-spacing: -3px; white-space: nowrap; }
.gf b + b { font-size: 17px; color: #674a94; }
.tray { margin-left: auto; display: flex; align-items: center; padding-right: 19px; }
.tray svg { stroke: #fff; stroke-width: 1.1; }
.up { width: 12px; height: 8px; }
.lang { width: 30px; margin: 0 13px 0 16px; text-align: center; letter-spacing: -.3px; }
.net { width: 17px; height: 17px; }
.spk { width: 16px; height: 14px; margin-left: 8px; }
.time { width: 70px; margin: 0 6px 0 10px; text-align: right; letter-spacing: -.1px; white-space: nowrap; }
.badge { width: 18px; height: 17px; border-radius: 9px; background: #4cc2ff; color: #111; font-size: 10px; font-weight: 400; text-align: center; line-height: 16px; letter-spacing: -.4px; }
```
